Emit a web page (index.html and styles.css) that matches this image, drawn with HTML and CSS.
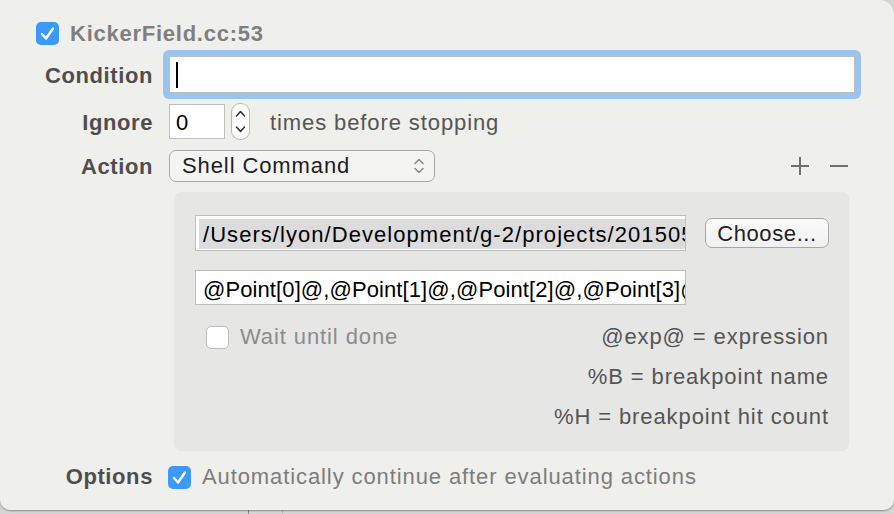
FILE: index.html
```html
<!DOCTYPE html>
<html>
<head>
<meta charset="utf-8">
<link rel="stylesheet" href="styles.css">
</head>
<body>
<div class="popover">
  <div class="title-row">
    <span class="check checked"><svg viewBox="0 0 23 23" width="23" height="23"><path d="M6 12 L10 16.5 L17 6.5" fill="none" stroke="#fff" stroke-width="2.4" stroke-linecap="round" stroke-linejoin="round"/></svg></span>
    <span class="title">KickerField.cc:53</span>
  </div>

  <div class="row row-condition">
    <div class="label">Condition</div>
    <div class="focus-ring"><div class="field field-wide"><span class="caret"></span></div></div>
  </div>

  <div class="row row-ignore">
    <div class="label">Ignore</div>
    <div class="field field-small">0</div>
    <div class="stepper">
      <svg viewBox="0 0 19 37" width="19" height="37"><path d="M5.5 13 L9.5 8.5 L13.5 13" fill="none" stroke="#333" stroke-width="1.6" stroke-linecap="round" stroke-linejoin="round"/><path d="M5.5 24 L9.5 28.5 L13.5 24" fill="none" stroke="#333" stroke-width="1.6" stroke-linecap="round" stroke-linejoin="round"/></svg>
    </div>
    <div class="after-text">times before stopping</div>
  </div>

  <div class="row row-action">
    <div class="label">Action</div>
    <div class="popup">
      <span class="popup-text">Shell Command</span>
      <svg class="popup-arrows" viewBox="0 0 14 20" width="14" height="20"><path d="M3 7.5 L7 3.5 L11 7.5" fill="none" stroke="#8a8a8a" stroke-width="1.6" stroke-linecap="round" stroke-linejoin="round"/><path d="M3 12.5 L7 16.5 L11 12.5" fill="none" stroke="#8a8a8a" stroke-width="1.6" stroke-linecap="round" stroke-linejoin="round"/></svg>
    </div>
    <div class="plusminus">
      <svg viewBox="0 0 18 18" width="18" height="18"><path d="M9 0 V18 M0 9 H18" stroke="#6f706b" stroke-width="2"/></svg>
      <svg viewBox="0 0 18 18" width="18" height="18"><path d="M0 9 H18" stroke="#6f706b" stroke-width="2"/></svg>
    </div>
  </div>

  <div class="panel">
    <div class="panel-row">
      <div class="field field-path"><span class="selected">/Users/lyon/Development/g-2/projects/20150513/run.sh</span></div>
      <div class="button">Choose...</div>
    </div>
    <div class="field field-args"><span class="args-text">@Point[0]@,@Point[1]@,@Point[2]@,@Point[3]@,@Point[4]@</span></div>
    <div class="panel-bottom">
      <div class="wait">
        <span class="check unchecked"></span>
        <span class="wait-text">Wait until done</span>
      </div>
      <div class="legend">
        <div>@exp@ = expression</div>
        <div>%B = breakpoint name</div>
        <div>%H = breakpoint hit count</div>
      </div>
    </div>
  </div>

  <div class="row row-options">
    <div class="label">Options</div>
    <span class="check checked"><svg viewBox="0 0 23 23" width="23" height="23"><path d="M6 12 L10 16.5 L17 6.5" fill="none" stroke="#fff" stroke-width="2.4" stroke-linecap="round" stroke-linejoin="round"/></svg></span>
    <span class="opt-text">Automatically continue after evaluating actions</span>
  </div>
</div>
<div class="below">
  <div class="below-line l1"></div>
  <div class="below-line l2"></div>
</div>
</body>
</html>
```
FILE: styles.css
```css
html, body {
  margin: 0;
  padding: 0;
}
body {
  width: 894px;
  height: 514px;
  overflow: hidden;
  background: #d6d6d4;
  font-family: "Liberation Sans", Arial, sans-serif;
  font-size: 22px;
  letter-spacing: 0.9px;
}
.popover {
  width: 894px;
  height: 510px;
  box-sizing: border-box;
  background: #efefec;
  border-radius: 0 14px 10px 10px;
  box-shadow: 0 1px 2px rgba(0,0,0,0.35);
  padding-top: 22px;
  display: flex;
  flex-direction: column;
  position: relative;
  z-index: 1;
}
.title-row {
  display: flex;
  align-items: center;
  padding-left: 36px;
  height: 23px;
}
.title {
  margin-left: 11px;
  font-weight: bold;
  color: #7f7f7f;
  letter-spacing: 0.75px;
}
.check {
  width: 23px;
  height: 23px;
  border-radius: 5px;
  box-sizing: border-box;
  display: inline-block;
  flex: none;
}
.check svg { display: block; }
.check.checked {
  background: #3b99fc;
}
.check.unchecked {
  background: #fff;
  border: 1px solid #bdbdbd;
}
.row {
  display: flex;
  align-items: center;
}
.label {
  width: 153px;
  flex: none;
  text-align: right;
  font-weight: bold;
  color: #4e4e4e;
  margin-right: 16px;
  letter-spacing: 0.6px;
}
.row-condition {
  margin-top: 5px;
}
.row-condition .label {
  padding-top: 3px;
}
.focus-ring {
  margin-left: -6px;
  padding: 6px;
  background: #9ac4f0;
  border-radius: 6px;
}
.field {
  background: #fff;
  border: 1px solid #bebebe;
  box-sizing: border-box;
  color: #000;
  white-space: nowrap;
  overflow: hidden;
}
.field-wide {
  width: 686px;
  height: 37px;
  display: flex;
  align-items: center;
  padding-left: 6px;
}
.caret {
  width: 2px;
  height: 26px;
  background: #000;
}
.row-ignore {
  margin-top: 4px;
}
.row-ignore .label,
.row-ignore .after-text {
  padding-top: 3px;
}
.field-small {
  width: 56px;
  height: 35px;
  line-height: 35px;
  padding-left: 6px;
}
.stepper {
  margin-left: 6px;
  width: 19px;
  height: 37px;
  border: 1px solid #b8b8b8;
  border-radius: 9px;
  box-sizing: border-box;
  background: #fff;
  overflow: hidden;
}
.stepper svg { display: block; margin: -1px; }
.after-text {
  margin-left: 20px;
  color: #555;
}
.row-action {
  margin-top: 10px;
}
.row-action .label {
  padding-top: 2px;
}
.popup {
  width: 266px;
  height: 32px;
  box-sizing: border-box;
  border: 1px solid #a8a8a8;
  border-radius: 7px;
  background: #f4f4f2;
  display: flex;
  align-items: center;
  padding-left: 12px;
  padding-right: 8px;
}
.popup-text {
  flex: 1;
  color: #1e1e1e;
}
.popup-arrows { display: block; }
.plusminus {
  margin-left: auto;
  margin-right: 46px;
  display: flex;
  gap: 21px;
}
.plusminus svg { display: block; }
.panel {
  margin-top: 10px;
  margin-left: 174px;
  width: 675px;
  height: 259px;
  box-sizing: border-box;
  background: #e6e6e4;
  border-radius: 7px;
  padding: 23px 20px 0 21px;
}
.panel-row {
  display: flex;
  align-items: center;
}
.field-path, .field-args {
  width: 491px;
  height: 36px;
  padding: 3px 0 3px 3px;
  flex: none;
}
.field-path {
  letter-spacing: 1.05px;
}
.selected {
  display: block;
  overflow: hidden;
  background: #dcdcdc;
  height: 30px;
  line-height: 31px;
  padding-left: 4px;
}
.field-args {
  margin-top: 19px;
  height: 35px;
  line-height: 31px;
  padding-left: 7px;
  letter-spacing: 0.1px;
}
.args-text {
  display: block;
  overflow: hidden;
}
.button {
  margin-left: 19px;
  width: 124px;
  height: 30px;
  box-sizing: border-box;
  border: 1px solid #a8a8a8;
  border-radius: 7px;
  background: linear-gradient(#fbfbfb, #f0f0f0);
  text-align: center;
  line-height: 29px;
  color: #222;
  letter-spacing: 0.6px;
}
.panel-bottom {
  display: flex;
  justify-content: space-between;
  margin-top: 12px;
}
.wait {
  display: flex;
  align-items: center;
  height: 40px;
  padding-left: 11px;
  align-self: flex-start;
}
.wait-text {
  margin-left: 11px;
  color: #8c8c8c;
}
.legend {
  text-align: right;
  color: #555;
}
.legend div {
  height: 40px;
  line-height: 40px;
}
.row-options {
  margin-top: 13px;
}
.row-options .label {
  margin-right: 15px;
}
.opt-text {
  margin-left: 11px;
  color: #7d7d7d;
}
.below {
  height: 4px;
  position: relative;
}
.below-line {
  position: absolute;
  top: 0;
  width: 1px;
  height: 4px;
  background: #888;
}
.below-line.l1 { left: 248px; }
.below-line.l2 { left: 282px; background: #bbb; }
```
